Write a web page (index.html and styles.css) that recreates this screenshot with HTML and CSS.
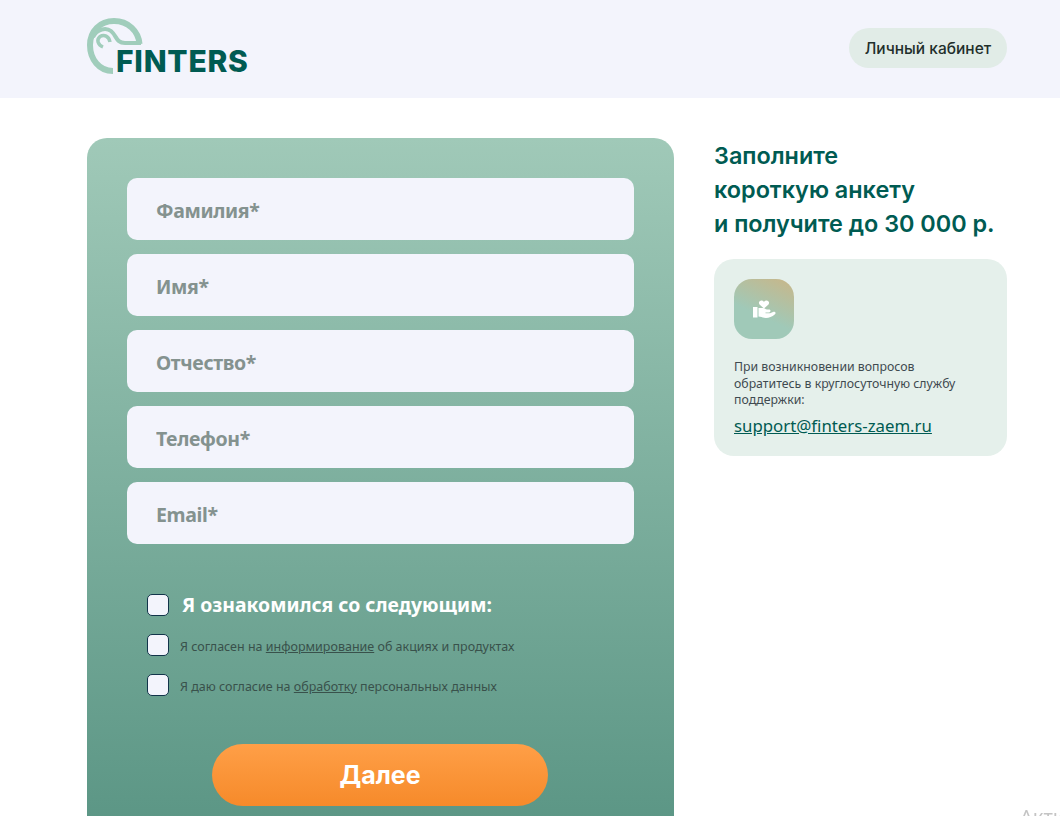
FILE: index.html
```html
<!DOCTYPE html>
<html lang="ru">
<head>
<meta charset="utf-8">
<title>Finters</title>
<link rel="stylesheet" href="styles.css">
</head>
<body>
<header class="header">
  <div class="wrap header-row">
    <a class="logo" href="#">
      <svg class="logo-mark" viewBox="87 17 58 58" aria-hidden="true">
        <path d="M113 71C99 71 90 59 90 45C90 31 100 21 114 21C128 21 138.500 31 139.500 44" fill="none" stroke="#a0cdbb" stroke-width="6"/>
        <path d="M93 37C97 29 106 27 111 31C117 36 116 43 125 43H141" fill="none" stroke="#a0cdbb" stroke-width="4"/>
        <path d="M103 47C98 45 96 40 100 36.500C104 34 109 36 110 42" fill="none" stroke="#a0cdbb" stroke-width="3.500"/>
      </svg>
      <span class="logo-text">FINTERS</span>
    </a>
    <a class="cabinet" href="#">Личный кабинет</a>
  </div>
</header>
<main class="wrap main">
  <form class="form-card">
    <div class="fields">
      <input class="field" placeholder="Фамилия*">
      <input class="field" placeholder="Имя*">
      <input class="field" placeholder="Отчество*">
      <input class="field" placeholder="Телефон*">
      <input class="field" placeholder="Email*">
    </div>
    <div class="checks">
      <label class="check check-main"><span class="box"></span><span>Я ознакомился со следующим:</span></label>
      <label class="check"><span class="box"></span><span class="check-text">Я согласен на <a href="#">информирование</a> об акциях и продуктах</span></label>
      <label class="check"><span class="box"></span><span class="check-text">Я даю согласие на <a href="#">обработку</a> персональных данных</span></label>
    </div>
    <button class="next" type="button">Далее</button>
  </form>
  <aside class="side">
    <h1 class="title">Заполните<br>короткую анкету<br>и получите до 30 000 р.</h1>
    <div class="support">
      <div class="support-icon">
        <svg viewBox="0 0 24 24" width="24" height="24" aria-hidden="true">
          <path d="M12 11.500L7.500 7.500C6 5.500 7.500 3.500 9.500 3.500C10.500 3.500 11.500 4 12 5C12.500 4 13.500 3.500 14.500 3.500C16.500 3.500 18 5.500 16.500 7.500Z" fill="#fff"/>
          <rect x="1" y="10" width="4.500" height="10.500" fill="#fff"/>
          <path d="M6.500 11h4.500c2 0 2.500 1.500 4 1.500h2c2 0 2 2.500 0 3h-3.500v.7h4.500l3-1.200c2-.8 3.500 1 2 2.200c-3 2.500-6 3.800-9 3.800c-2 0-4-1-7.500-1.500z" fill="#fff"/>
        </svg>
      </div>
      <p class="support-text">При возникновении вопросов обратитесь в круглосуточную службу поддержки:</p>
      <a class="support-mail" href="#">support@finters-zaem.ru</a>
    </div>
  </aside>
</main>
<div class="watermark">Активация Windows</div>
</body>
</html>
```
FILE: styles.css
```css
* { box-sizing: border-box; }
html, body { height: 816px; overflow: hidden; }
body { margin: 0; background: #fff; font-family: "Noto Sans", "Open Sans", sans-serif; color: #333; }
.wrap { width: 920px; margin-left: 87px; }
.header { height: 98px; background: #f3f4fc; }
.header-row { height: 98px; display: flex; justify-content: space-between; align-items: flex-start; }
.logo { position: relative; display: block; width: 163px; height: 80px; text-decoration: none; }
.logo-mark { position: absolute; left: 0; top: 17px; width: 58px; height: 58px; }
.logo-text { position: absolute; left: 29px; top: 44px; font: 800 30px/34px Inter, sans-serif; color: #005b52; letter-spacing: .75px; }
.cabinet { margin-top: 28px; width: 158px; height: 40px; padding-top: 1px; border-radius: 20px; background: #e1ece7; color: #1f2f2c; font: 500 15.500px/40px Inter, sans-serif; text-align: center; text-decoration: none; }
.main { display: flex; gap: 40px; padding-top: 40px; align-items: flex-start; }
.form-card { flex: 0 0 587px; height: 700px; padding: 40px; border-radius: 20px; background: linear-gradient(180deg, #a0c9b8 0%, #5a9584 100%); }
.fields { display: flex; flex-direction: column; gap: 14px; }
.field { display: block; width: 100%; height: 62px; padding: 3px 29px 0; border: 0; border-radius: 10px; background: #f3f4fc; font: 700 19.500px "Noto Sans", sans-serif; letter-spacing: -.35px; outline: none; }
.field::placeholder { color: #84928f; opacity: 1; }
.checks { margin-top: 50px; padding-left: 20px; display: flex; flex-direction: column; gap: 18px; }
.check { display: flex; align-items: center; gap: 11px; font-size: 12.500px; line-height: 22px; color: #39514b; }
.check-text { padding-top: 4px; line-height: 18px; }
.check a { color: inherit; }
.check-main { font-size: 19.400px; font-weight: 700; color: #fff; gap: 13px; }
.box { flex: none; width: 22px; height: 22px; border: 1.500px solid #12344a; border-radius: 5px; background: #f3f4fc; }
.next { display: block; margin: 48px 0 0 85px; width: 336px; height: 62px; border: 0; border-radius: 31px; background: linear-gradient(180deg, #ff9f47 0%, #f68a2a 100%); color: #fff; font: 700 25px Inter, sans-serif; }
.side { flex: 0 0 293px; }
.title { margin: 0 0 18px; padding-top: 1px; font: 600 23.400px/34px Inter, sans-serif; color: #005b52; }
.support { height: 197px; padding: 20px; border-radius: 20px; background: #e5f0eb; }
.support-icon { width: 60px; height: 60px; border-radius: 18px; display: flex; align-items: center; justify-content: center; background: linear-gradient(205deg, #c9b688 0%, #a0c9b8 60%); }
.support-text { margin: 20px 0 0; max-width: 235px; font-size: 12.300px; line-height: 16.500px; color: #3f4a50; }
.support-mail { display: block; margin-top: 6px; font-size: 16.800px; line-height: 22px; color: #005b52; }
.watermark { position: fixed; left: 1020px; top: 803px; white-space: nowrap; font: 20px "Noto Sans", sans-serif; color: #c4c4c4; }
```
